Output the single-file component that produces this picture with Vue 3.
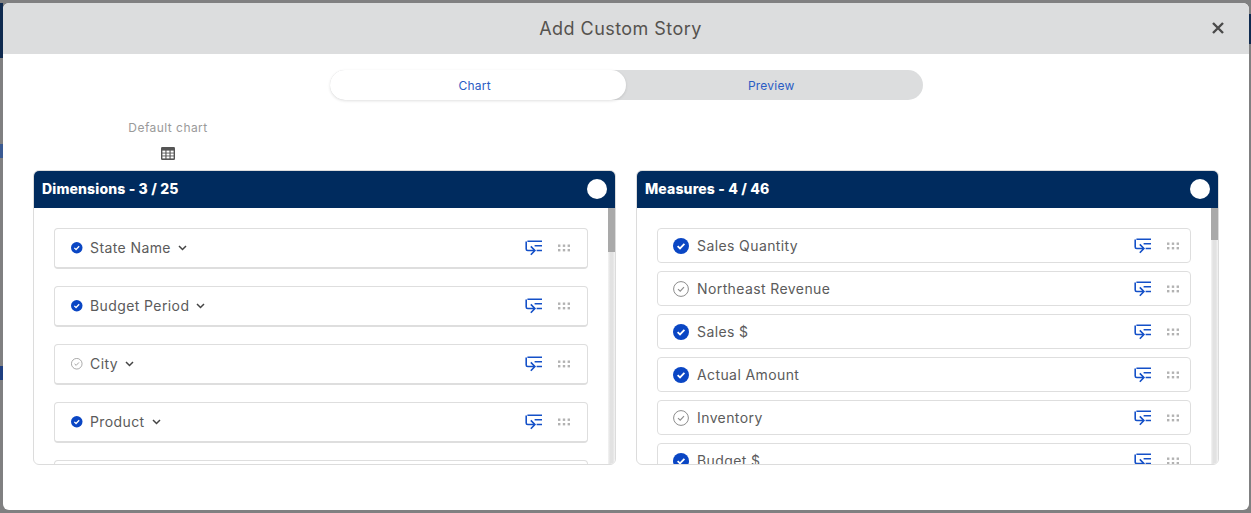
<script setup>
const dims = [
  { name: 'State Name', on: true },
  { name: 'Budget Period', on: true },
  { name: 'City', on: false },
  { name: 'Product', on: true }
]
const measures = [
  { name: 'Sales Quantity', on: true },
  { name: 'Northeast Revenue', on: false },
  { name: 'Sales $', on: true },
  { name: 'Actual Amount', on: true },
  { name: 'Inventory', on: false },
  { name: 'Budget $', on: true }
]
const panels = [
  { title: 'Dimensions - 3 / 25', rows: dims, kind: 'dim' },
  { title: 'Measures - 4 / 46', rows: measures, kind: 'mea' }
]
</script>

<template>
  <div class="page">
    <div class="bg-bit navy-left"></div>
    <div class="bg-bit navy-right"></div>
    <div class="bg-bit blue-a"></div>
    <div class="bg-bit blue-b"></div>
    <div class="modal">
      <header class="head">
        <h1>Add Custom Story</h1>
        <svg class="close" viewBox="0 0 12 12" width="12" height="12">
          <path d="M1 1 11 11M11 1 1 11" stroke="#4a4a4a" stroke-width="2.4" fill="none" />
        </svg>
      </header>
      <div class="tabs">
        <div class="tab active">Chart</div>
        <div class="tab">Preview</div>
      </div>
      <div class="chart-pick">
        <span>Default chart</span>
        <svg viewBox="0 0 14 13" width="14" height="13">
          <rect x="0" y="0" width="14" height="13" rx="1.2" fill="#555" />
          <g fill="#fff">
            <rect x="1.4" y="3.6" width="3" height="2" /><rect x="5.5" y="3.6" width="3" height="2" /><rect x="9.6" y="3.6" width="3" height="2" />
            <rect x="1.4" y="6.5" width="3" height="2" /><rect x="5.5" y="6.5" width="3" height="2" /><rect x="9.6" y="6.5" width="3" height="2" />
            <rect x="1.4" y="9.4" width="3" height="2" /><rect x="5.5" y="9.4" width="3" height="2" /><rect x="9.6" y="9.4" width="3" height="2" />
          </g>
        </svg>
      </div>
      <div class="panels">
        <section v-for="p in panels" :key="p.kind" class="panel" :class="p.kind">
          <div class="panel-head">
            <strong>{{ p.title }}</strong>
            <span class="knob"></span>
          </div>
          <div class="scroll">
            <div class="list">
              <div v-for="r in p.rows" :key="r.name" class="row">
                <svg v-if="r.on" class="check" viewBox="0 0 16 16">
                  <circle cx="8" cy="8" r="8" fill="#0a46c4" />
                  <path d="M4.6 8.2 7 10.4 11.4 5.9" stroke="#fff" stroke-width="1.8" fill="none" />
                </svg>
                <svg v-else class="check" viewBox="0 0 16 16">
                  <circle cx="8" cy="8" r="7.4" fill="none" stroke="#8c8c8c" stroke-width="1" />
                  <path d="M5 8.2 7.2 10.2 11 6.2" stroke="#8c8c8c" stroke-width="1.1" fill="none" />
                </svg>
                <span class="name">{{ r.name }}</span>
                <svg v-if="p.kind === 'dim'" class="chev" viewBox="0 0 9 6" width="9" height="6">
                  <path d="M1 1 4.5 4.5 8 1" stroke="#444" stroke-width="1.5" fill="none" />
                </svg>
                <svg class="flow" viewBox="0 0 18 16" width="18" height="16">
                  <path d="M2.4 1.2H17M1.2 1.4V9Q1.2 10.5 2.7 10.5H9.5M5.8 6.4 9.9 10.5 5.8 14.8M9.6 5.8H17M11.6 10.5H17" stroke="#1450c8" stroke-width="1.6" fill="none" />
                </svg>
                <svg class="dots" viewBox="0 0 12 8" width="12" height="8">
                  <g fill="#b2b2b2">
                    <rect x="0" y="0.5" width="2.4" height="2.4" /><rect x="4.8" y="0.5" width="2.4" height="2.4" /><rect x="9.6" y="0.5" width="2.4" height="2.4" />
                    <rect x="0" y="5" width="2.4" height="2.4" /><rect x="4.8" y="5" width="2.4" height="2.4" /><rect x="9.6" y="5" width="2.4" height="2.4" />
                  </g>
                </svg>
              </div>
              <div v-if="p.kind === 'dim'" class="row"></div>
            </div>
          </div>
          <div class="bar"><div class="thumb"></div></div>
        </section>
      </div>
    </div>
  </div>
</template>

<style>
html, body { margin: 0; background: #808081; }
</style>

<style scoped>
.page {
  position: relative;
  width: 1251px;
  height: 513px;
  box-sizing: border-box;
  padding: 3px 2px 3px 3px;
  background: #808081;
  overflow: hidden;
  font-family: Inter, "Noto Sans", sans-serif;
}
.bg-bit { position: absolute; }
.navy-left { left: 0; top: 3px; width: 3px; height: 55px; background: #0f2a4f; }
.navy-right { right: 0; top: 14px; width: 2px; height: 30px; background: #0f2a4f; }
.blue-a { left: 0; top: 144px; width: 3px; height: 14px; background: #3a5a92; }
.blue-b { left: 0; top: 366px; width: 3px; height: 14px; background: #1f3f80; }
.modal {
  position: relative;
  height: 507px;
  background: #fff;
  border-radius: 6px;
  overflow: hidden;
}
.head {
  position: relative;
  height: 51px;
  box-sizing: border-box;
  padding-right: 11px;
  background: #dcddde;
  display: flex;
  align-items: center;
  justify-content: center;
}
.head h1 {
  margin: 0;
  font-size: 18px;
  font-weight: 400;
  color: #55524e;
  letter-spacing: 0.45px;
}
.close { position: absolute; right: 25px; top: 19px; }
.tabs {
  display: flex;
  width: 593px;
  height: 30px;
  margin: 16px auto 0;
  background: #dcddde;
  border-radius: 15px;
}
.tab {
  flex: 1;
  display: flex;
  align-items: center;
  justify-content: center;
  box-sizing: border-box;
  padding-right: 6px;
  font-size: 12px;
  letter-spacing: 0.25px;
  color: #2a5cc4;
  border-radius: 15px;
}
.tab.active {
  background: #fff;
  box-shadow: 0 1px 3px rgba(0, 0, 0, 0.12);
}
.chart-pick {
  display: flex;
  flex-direction: column;
  align-items: center;
  width: 270px;
  margin: 21px 0 0 30px;
  height: 49px;
  font-size: 12px;
  letter-spacing: 0.45px;
  color: #9a9a9a;
}
.chart-pick span { line-height: 14px; margin-bottom: 12px; }
.panels {
  display: grid;
  grid-template-columns: 583px 583px;
  gap: 20px;
  padding: 0 30px;
}
.panel {
  position: relative;
  height: 295px;
  box-sizing: border-box;
  border: 1px solid #dcdcdc;
  border-radius: 6px;
  overflow: hidden;
  display: flex;
  flex-direction: column;
}
.panel-head {
  height: 37px;
  flex: none;
  box-sizing: border-box;
  background: #002b5e;
  display: flex;
  align-items: center;
  justify-content: space-between;
  padding: 0 8px;
  color: #fff;
  font-size: 14px;
}
.panel-head strong {
  font-weight: 800;
  letter-spacing: 0.15px;
  margin-top: -2px;
}
.knob {
  width: 20px;
  height: 20px;
  margin-top: -1px;
  border-radius: 50%;
  background: #fff;
}
.scroll {
  flex: 1;
  overflow: hidden;
  min-height: 0;
}
.bar {
  position: absolute;
  top: 37px;
  right: 0;
  bottom: 0;
  width: 7px;
  background: linear-gradient(90deg, #f4f4f4, #e2e2e2 30%, #e2e2e2 70%, #f4f4f4);
}
.thumb { background: #a9a9a9; }
.dim .thumb { height: 44px; }
.mea .thumb { height: 32px; }
.list { padding: 20px 20px 0; }
.row {
  display: flex;
  align-items: center;
  width: 534px;
  box-sizing: border-box;
  background: #fff;
  border: 1px solid #dedede;
  border-radius: 4px;
  color: #5b5b5b;
}
.dim .row {
  height: 41px;
  margin-bottom: 17px;
  border-bottom-width: 2px;
  padding: 0 17px 0 16px;
  font-size: 14px;
}
.mea .row {
  height: 35px;
  margin-bottom: 8px;
  padding: 0 11px 0 15px;
  font-size: 14px;
}
.check { flex: none; }
.dim .check { width: 11.5px; height: 11.5px; margin-right: 7.5px; }
.mea .check { width: 16px; height: 16px; margin-right: 8px; }
.name { letter-spacing: 0.4px; }
.dim .name { margin-top: -1px; }
.chev { margin-left: 7px; }
.flow { margin-left: auto; margin-right: 15px; }
</style>
